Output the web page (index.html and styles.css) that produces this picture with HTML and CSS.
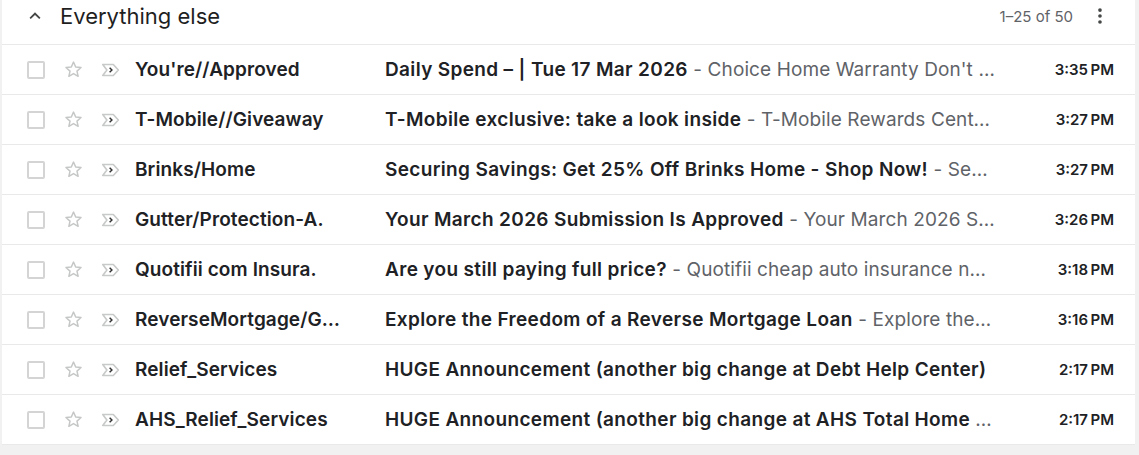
FILE: index.html
```html
<!DOCTYPE html>
<html>
<head>
<meta charset="utf-8">
<link rel="stylesheet" href="styles.css">
</head>
<body>
<div class="panel">
  <div class="header">
    <svg class="chev" viewBox="0 0 24 24" width="24" height="24"><path d="M7.4 15.4 12 10.8l4.6 4.6L18 14l-6-6-6 6z" fill="#444746"/></svg>
    <div class="title">Everything else</div>
    <div class="pager">1–25 of 50</div>
    <svg class="kebab" viewBox="0 0 24 24" width="24" height="24"><circle cx="12" cy="5.5" r="2" fill="#444746"/><circle cx="12" cy="12" r="2" fill="#444746"/><circle cx="12" cy="18.5" r="2" fill="#444746"/></svg>
  </div>
  <div class="list">
    <div class="row">
      <span class="cb"></span>
      <svg class="star" viewBox="0 0 24 24" width="21" height="21"><path d="M12 3.5l2.5 5.6 6.1.6-4.6 4.1 1.3 6-5.3-3.1-5.3 3.1 1.3-6-4.6-4.1 6.1-.6z" fill="none" stroke="#c4c7c5" stroke-width="1.7" stroke-linejoin="round"/></svg>
      <svg class="imp" viewBox="0 0 24 24" width="22" height="22"><path d="M3 6h11.5l5.5 6-5.5 6H3l4.5-6z" fill="none" stroke="#c8cac9" stroke-width="1.8" stroke-linejoin="round"/><path d="M10.5 9.5l2.5 2.5-2.5 2.5" fill="none" stroke="#333" stroke-width="1.6"/></svg>
      <div class="sender">You're//Approved</div>
      <div class="content"><span class="subj">Daily Spend – | Tue 17 Mar 2026</span><span class="snip"> - Choice Home Warranty Don't miss out on coverage for your home systems and appliances</span></div>
      <div class="time">3:35&#8239;PM</div>
    </div>
    <div class="row">
      <span class="cb"></span>
      <svg class="star" viewBox="0 0 24 24" width="21" height="21"><path d="M12 3.5l2.5 5.6 6.1.6-4.6 4.1 1.3 6-5.3-3.1-5.3 3.1 1.3-6-4.6-4.1 6.1-.6z" fill="none" stroke="#c4c7c5" stroke-width="1.7" stroke-linejoin="round"/></svg>
      <svg class="imp" viewBox="0 0 24 24" width="22" height="22"><path d="M3 6h11.5l5.5 6-5.5 6H3l4.5-6z" fill="none" stroke="#c8cac9" stroke-width="1.8" stroke-linejoin="round"/><path d="M10.5 9.5l2.5 2.5-2.5 2.5" fill="none" stroke="#333" stroke-width="1.6"/></svg>
      <div class="sender">T-Mobile//Giveaway</div>
      <div class="content"><span class="subj">T-Mobile exclusive: take a look inside</span><span class="snip"> - T-Mobile Rewards Center has something waiting for you</span></div>
      <div class="time">3:27&#8239;PM</div>
    </div>
    <div class="row">
      <span class="cb"></span>
      <svg class="star" viewBox="0 0 24 24" width="21" height="21"><path d="M12 3.5l2.5 5.6 6.1.6-4.6 4.1 1.3 6-5.3-3.1-5.3 3.1 1.3-6-4.6-4.1 6.1-.6z" fill="none" stroke="#c4c7c5" stroke-width="1.7" stroke-linejoin="round"/></svg>
      <svg class="imp" viewBox="0 0 24 24" width="22" height="22"><path d="M3 6h11.5l5.5 6-5.5 6H3l4.5-6z" fill="none" stroke="#c8cac9" stroke-width="1.8" stroke-linejoin="round"/><path d="M10.5 9.5l2.5 2.5-2.5 2.5" fill="none" stroke="#333" stroke-width="1.6"/></svg>
      <div class="sender">Brinks/Home</div>
      <div class="content"><span class="subj">Securing Savings: Get 25% Off Brinks Home - Shop Now!</span><span class="snip"> - Securing Savings for your home today</span></div>
      <div class="time">3:27&#8239;PM</div>
    </div>
    <div class="row">
      <span class="cb"></span>
      <svg class="star" viewBox="0 0 24 24" width="21" height="21"><path d="M12 3.5l2.5 5.6 6.1.6-4.6 4.1 1.3 6-5.3-3.1-5.3 3.1 1.3-6-4.6-4.1 6.1-.6z" fill="none" stroke="#c4c7c5" stroke-width="1.7" stroke-linejoin="round"/></svg>
      <svg class="imp" viewBox="0 0 24 24" width="22" height="22"><path d="M3 6h11.5l5.5 6-5.5 6H3l4.5-6z" fill="none" stroke="#c8cac9" stroke-width="1.8" stroke-linejoin="round"/><path d="M10.5 9.5l2.5 2.5-2.5 2.5" fill="none" stroke="#333" stroke-width="1.6"/></svg>
      <div class="sender">Gutter/Protection-A.</div>
      <div class="content"><span class="subj">Your March 2026 Submission Is Approved</span><span class="snip"> - Your March 2026 Submission has been reviewed</span></div>
      <div class="time">3:26&#8239;PM</div>
    </div>
    <div class="row">
      <span class="cb"></span>
      <svg class="star" viewBox="0 0 24 24" width="21" height="21"><path d="M12 3.5l2.5 5.6 6.1.6-4.6 4.1 1.3 6-5.3-3.1-5.3 3.1 1.3-6-4.6-4.1 6.1-.6z" fill="none" stroke="#c4c7c5" stroke-width="1.7" stroke-linejoin="round"/></svg>
      <svg class="imp" viewBox="0 0 24 24" width="22" height="22"><path d="M3 6h11.5l5.5 6-5.5 6H3l4.5-6z" fill="none" stroke="#c8cac9" stroke-width="1.8" stroke-linejoin="round"/><path d="M10.5 9.5l2.5 2.5-2.5 2.5" fill="none" stroke="#333" stroke-width="1.6"/></svg>
      <div class="sender">Quotifii com Insura.</div>
      <div class="content"><span class="subj">Are you still paying full price?</span><span class="snip"> - Quotifii cheap auto insurance near you today</span></div>
      <div class="time">3:18&#8239;PM</div>
    </div>
    <div class="row">
      <span class="cb"></span>
      <svg class="star" viewBox="0 0 24 24" width="21" height="21"><path d="M12 3.5l2.5 5.6 6.1.6-4.6 4.1 1.3 6-5.3-3.1-5.3 3.1 1.3-6-4.6-4.1 6.1-.6z" fill="none" stroke="#c4c7c5" stroke-width="1.7" stroke-linejoin="round"/></svg>
      <svg class="imp" viewBox="0 0 24 24" width="22" height="22"><path d="M3 6h11.5l5.5 6-5.5 6H3l4.5-6z" fill="none" stroke="#c8cac9" stroke-width="1.8" stroke-linejoin="round"/><path d="M10.5 9.5l2.5 2.5-2.5 2.5" fill="none" stroke="#333" stroke-width="1.6"/></svg>
      <div class="sender">ReverseMortgage/Guide</div>
      <div class="content"><span class="subj">Explore the Freedom of a Reverse Mortgage Loan</span><span class="snip"> - Explore the options available</span></div>
      <div class="time">3:16&#8239;PM</div>
    </div>
    <div class="row">
      <span class="cb"></span>
      <svg class="star" viewBox="0 0 24 24" width="21" height="21"><path d="M12 3.5l2.5 5.6 6.1.6-4.6 4.1 1.3 6-5.3-3.1-5.3 3.1 1.3-6-4.6-4.1 6.1-.6z" fill="none" stroke="#c4c7c5" stroke-width="1.7" stroke-linejoin="round"/></svg>
      <svg class="imp" viewBox="0 0 24 24" width="22" height="22"><path d="M3 6h11.5l5.5 6-5.5 6H3l4.5-6z" fill="none" stroke="#c8cac9" stroke-width="1.8" stroke-linejoin="round"/><path d="M10.5 9.5l2.5 2.5-2.5 2.5" fill="none" stroke="#333" stroke-width="1.6"/></svg>
      <div class="sender">Relief_Services</div>
      <div class="content"><span class="subj">HUGE Announcement (another big change at Debt Help Center)</span></div>
      <div class="time">2:17&#8239;PM</div>
    </div>
    <div class="row">
      <span class="cb"></span>
      <svg class="star" viewBox="0 0 24 24" width="21" height="21"><path d="M12 3.5l2.5 5.6 6.1.6-4.6 4.1 1.3 6-5.3-3.1-5.3 3.1 1.3-6-4.6-4.1 6.1-.6z" fill="none" stroke="#c4c7c5" stroke-width="1.7" stroke-linejoin="round"/></svg>
      <svg class="imp" viewBox="0 0 24 24" width="22" height="22"><path d="M3 6h11.5l5.5 6-5.5 6H3l4.5-6z" fill="none" stroke="#c8cac9" stroke-width="1.8" stroke-linejoin="round"/><path d="M10.5 9.5l2.5 2.5-2.5 2.5" fill="none" stroke="#333" stroke-width="1.6"/></svg>
      <div class="sender">AHS_Relief_Services</div>
      <div class="content"><span class="subj">HUGE Announcement (another big change at AHS Total Home Protection)</span></div>
      <div class="time">2:17&#8239;PM</div>
    </div>
  </div>
</div>
</body>
</html>
```

FILE: styles.css
```css
html, body {
  margin: 0;
  padding: 0;
  background: #f1f1f1;
}
body {
  width: 1139px;
  height: 455px;
  overflow: hidden;
  font-family: Inter, Roboto, sans-serif;
  color: #202124;
}
.panel {
  margin-left: 2px;
  width: 1133px;
  background: #fff;
}
.header {
  height: 44px;
  display: flex;
  align-items: center;
  border-bottom: 1px solid #e9e9e9;
}
.chev {
  margin-left: 22px;
  margin-top: -12px;
  width: 22px;
  height: 22px;
}
.title {
  margin-left: 14px;
  font-size: 22px;
  color: #1f1f1f;
  margin-top: -13px;
}
.pager {
  margin-left: auto;
  font-size: 15px;
  color: #5f6368;
  margin-top: -12px;
}
.kebab {
  margin-left: 16px;
  margin-right: 24px;
  width: 22px;
  height: 22px;
  margin-top: -12px;
}
.row {
  height: 49px;
  display: flex;
  align-items: center;
  border-bottom: 1px solid #e9e9e9;
}
.cb {
  flex: none;
  margin-left: 25px;
  width: 14px;
  height: 14px;
  border: 2px solid #d4d4d4;
  border-radius: 2px;
}
.star {
  flex: none;
  margin-left: 18px;
}
.imp {
  flex: none;
  margin-left: 16px;
}
.sender {
  flex: none;
  width: 250px;
  margin-left: 13px;
  font-size: 19px;
  font-weight: 600;
  letter-spacing: 0.1px;
  white-space: nowrap;
  overflow: hidden;
  text-overflow: ellipsis;
  padding-right: 38px;
  box-sizing: border-box;
}
.content {
  flex: 1;
  min-width: 0;
  font-size: 19px;
  letter-spacing: 0.35px;
  white-space: nowrap;
  overflow: hidden;
  text-overflow: ellipsis;
  color: #5f6368;
  padding-right: 14px;
}
.subj {
  font-weight: 600;
  color: #202124;
}
.snip {
  letter-spacing: 0.1px;
}
.time {
  flex: none;
  width: 72px;
  margin-left: 32px;
  margin-right: 21px;
  text-align: right;
  font-size: 15px;
  font-weight: 600;
  color: #202124;
  white-space: nowrap;
}
```
